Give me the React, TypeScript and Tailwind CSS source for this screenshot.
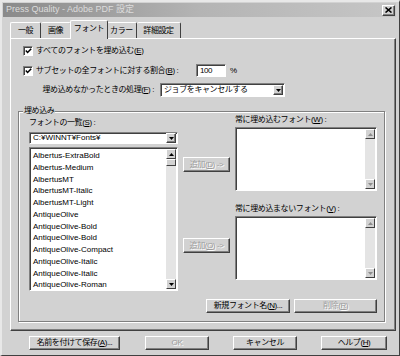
import type { ReactNode } from "react";

const FONTS = [
  "Albertus-ExtraBold",
  "Albertus-Medium",
  "AlbertusMT",
  "AlbertusMT-Italic",
  "AlbertusMT-Light",
  "AntiqueOlive",
  "AntiqueOlive-Bold",
  "AntiqueOlive-Bold",
  "AntiqueOlive-Compact",
  "AntiqueOlive-Italic",
  "AntiqueOlive-Italic",
  "AntiqueOlive-Roman",
];

const raised =
  "border border-t-white border-l-white border-b-[#404040] border-r-[#404040] shadow-[inset_-1px_-1px_0_#808080] bg-[#d2d2d2]";
const sunken =
  "border border-t-[#808080] border-l-[#808080] border-b-white border-r-white shadow-[inset_1px_1px_0_#404040] bg-white";

function Btn({ children, className = "", disabled = false }: { children: ReactNode; className?: string; disabled?: boolean }) {
  return (
    <div
      className={`${raised} flex items-center justify-center leading-none ${
        disabled ? "text-[#9c9c9c] [text-shadow:1px_1px_0_#fff]" : "text-black"
      } ${className}`}
    >
      {children}
    </div>
  );
}

function Arrow({ down = false, dim = false }: { down?: boolean; dim?: boolean }) {
  return (
    <div className="w-[10px] h-[10px] shrink-0 border border-t-white border-l-white border-b-[#404040] border-r-[#404040] bg-[#d2d2d2] flex items-center justify-center">
      <svg width="5" height="3" viewBox="0 0 5 3">
        <path d={down ? "M0 0h5L2.5 3z" : "M0 3h5L2.5 0z"} fill={dim ? "#8c8c8c" : "#000"} />
      </svg>
    </div>
  );
}

function Check() {
  return (
    <div className={`${sunken} w-[10px] h-[10px] shrink-0 flex items-center justify-center`}>
      <svg width="7" height="6" viewBox="0 0 7 6">
        <path d="M0.8 2.6l1.8 1.9L6.2 0.8" stroke="#000" strokeWidth="1.5" fill="none" />
      </svg>
    </div>
  );
}

function EmptyList({ className = "" }: { className?: string }) {
  return (
    <div className={`${sunken} flex justify-end p-[1px] ${className}`}>
      <div className="w-[10px] flex flex-col bg-[#e4e4e4]">
        <Arrow dim />
        <div className="flex-1" />
        <Arrow down dim />
      </div>
    </div>
  );
}

export default function App() {
  return (
    <div className="w-[400px] h-[356px] bg-[#d2d2d2] flex flex-col px-[3px] pt-[3px] overflow-hidden text-[8px] tracking-[-0.4px] text-black font-['Liberation_Sans','Noto_Sans_CJK_JP',sans-serif] border-t-2 border-l-2 border-t-[#e8e8e8] border-l-[#e8e8e8] border-r border-b border-r-[#404040] border-b-[#404040]">
      {/* title bar */}
      <div className="h-[14px] -mt-[2px] -ml-[2px] flex items-center pl-[3px] pr-[1px] bg-gradient-to-r from-[#8a8a8a] via-[#b4b4b4] to-[#c6c6c6] text-[#dcdcdc] text-[9px] tracking-normal">
        <span>Press Quality - Adobe PDF 設定</span>
        <div className={`${raised} ml-auto w-[13px] h-[11px] flex items-center justify-center`}>
          <svg width="7" height="6" viewBox="0 0 7 6">
            <path d="M0.5 0.5l6 5M6.5 0.5l-6 5" stroke="#000" strokeWidth="1.6" />
          </svg>
        </div>
      </div>

      {/* tabs */}
      <div className="h-[18px] mt-[3px] pl-[5px] flex items-end">
        <div className="w-[31px] h-[16px] border-t border-l border-r border-t-white border-l-white border-r-[#404040] rounded-t-[2px] flex items-center justify-center">一般</div>
        <div className="w-[30px] h-[16px] border-t border-r border-t-white border-r-[#404040] rounded-t-[2px] flex items-center justify-center">画像</div>
        <div className="w-[38px] h-[19px] -mb-[1px] -mx-[1px] relative z-10 bg-[#d2d2d2] border-t border-l border-r border-t-white border-l-white border-r-[#404040] rounded-t-[2px] flex items-center justify-center pb-[2px]">フォント</div>
        <div className="w-[30px] h-[16px] border-t border-r border-t-white border-r-[#404040] rounded-t-[2px] flex items-center justify-center">カラー</div>
        <div className="w-[44px] h-[16px] border-t border-r border-t-white border-r-[#404040] rounded-t-[2px] flex items-center justify-center">詳細設定</div>
      </div>

      {/* panel */}
      <div className="ml-[5px] w-[386px] h-[293px] flex flex-col border border-t-white border-l-white border-b-[#404040] border-r-[#404040] shadow-[inset_-1px_-1px_0_#808080]">
        <div className="mt-[7px] ml-[12px] h-[10px] flex items-center gap-[3px]">
          <Check />
          <span>
            すべてのフォントを埋め込む(<u>E</u>)
          </span>
        </div>

        <div className="mt-[8px] ml-[12px] h-[13px] flex items-center">
          <Check />
          <span className="ml-[3px] w-[160px]">
            サブセットの全フォントに対する割合(<u>B</u>) :
          </span>
          <div className={`${sunken} w-[30px] h-[13px] flex items-center pl-[3px]`}>100</div>
          <span className="ml-[4px]">%</span>
        </div>

        <div className="mt-[6px] ml-[28px] h-[14px] flex items-center">
          <span className="w-[115px] text-right whitespace-nowrap">
            埋め込めなかったときの処理(<u>F</u>) :
          </span>
          <div className={`${sunken} ml-[6px] w-[125px] h-[14px] flex items-center pl-[3px] pr-[1px]`}>
            <span className="flex-1">ジョブをキャンセルする</span>
            <Btn className="w-[10px] h-[10px]">
              <svg width="5" height="3" viewBox="0 0 5 3">
                <path d="M0 0h5L2.5 3z" fill="#000" />
              </svg>
            </Btn>
          </div>
        </div>

        {/* group box */}
        <div className="relative mt-[14px] ml-[7px] w-[367px] h-[211px] border border-[#808080] shadow-[inset_1px_1px_0_#fff,1px_1px_0_#fff] flex flex-col">
          <span className="absolute -top-[6px] left-[4px] px-[1px] bg-[#d2d2d2] leading-[10px]">埋め込み</span>

          <div className="flex">
            {/* font list column */}
            <div className="ml-[10px] w-[149px] flex flex-col">
              <span className="mt-[6px] h-[10px] leading-[10px]">
                フォントの一覧(<u>S</u>) :
              </span>
              <div className={`${sunken} mt-[4px] h-[12px] flex items-center pl-[3px] pr-[1px]`}>
                <span className="flex-1 tracking-normal">C:¥WINNT¥Fonts¥</span>
                <Btn className="w-[10px] h-[10px]">
                  <svg width="5" height="3" viewBox="0 0 5 3">
                    <path d="M0 0h5L2.5 3z" fill="#000" />
                  </svg>
                </Btn>
              </div>
              <div className={`${sunken} mt-[3px] h-[144px] flex p-[1px]`}>
                <div className="flex-1 flex flex-col pl-[2px] pt-[1px] tracking-normal">
                  {FONTS.map((f, i) => (
                    <span key={i} className="leading-[11.75px] whitespace-nowrap">
                      {f}
                    </span>
                  ))}
                </div>
                <div className="w-[10px] flex flex-col bg-[#e4e4e4]">
                  <Arrow />
                  <div className="h-[7px] border border-t-white border-l-white border-b-[#404040] border-r-[#404040] bg-[#d2d2d2]" />
                  <div className="flex-1" />
                  <Arrow down />
                </div>
              </div>
            </div>

            {/* add buttons */}
            <div className="ml-[5px] w-[47px] flex flex-col">
              <Btn disabled className="mt-[45px] h-[15px]">
                追加(<u>D</u>) -&gt;
              </Btn>
              <Btn disabled className="mt-[66px] h-[15px]">
                追加(<u>O</u>) -&gt;
              </Btn>
            </div>

            {/* right lists */}
            <div className="ml-[5px] w-[142px] flex flex-col">
              <span className="mt-[3px] h-[10px] leading-[10px]">
                常に埋め込むフォント(<u>W</u>) :
              </span>
              <EmptyList className="mt-[2px] h-[64px]" />
              <span className="mt-[13px] h-[10px] leading-[10px]">
                常に埋め込まないフォント(<u>V</u>) :
              </span>
              <EmptyList className="mt-[2px] h-[64px]" />
            </div>
          </div>

          <div className="mt-[8px] flex justify-end gap-[4px] pr-[7px]">
            <Btn className="w-[84px] h-[14px]">
              新規フォント名(<u>N</u>)...
            </Btn>
            <Btn disabled className="w-[83px] h-[14px]">
              削除(<u>R</u>)
            </Btn>
          </div>
        </div>
      </div>

      {/* dialog buttons */}
      <div className="mt-[5px] flex">
        <Btn className="ml-[24px] w-[91px] h-[14px]">
          名前を付けて保存(<u>A</u>)...
        </Btn>
        <Btn disabled className="ml-[25px] w-[64px] h-[14px]">
          OK
        </Btn>
        <Btn className="ml-[24px] w-[64px] h-[14px]">キャンセル</Btn>
        <Btn className="ml-[24px] w-[66px] h-[14px]">
          ヘルプ(<u>H</u>)
        </Btn>
      </div>
    </div>
  );
}
